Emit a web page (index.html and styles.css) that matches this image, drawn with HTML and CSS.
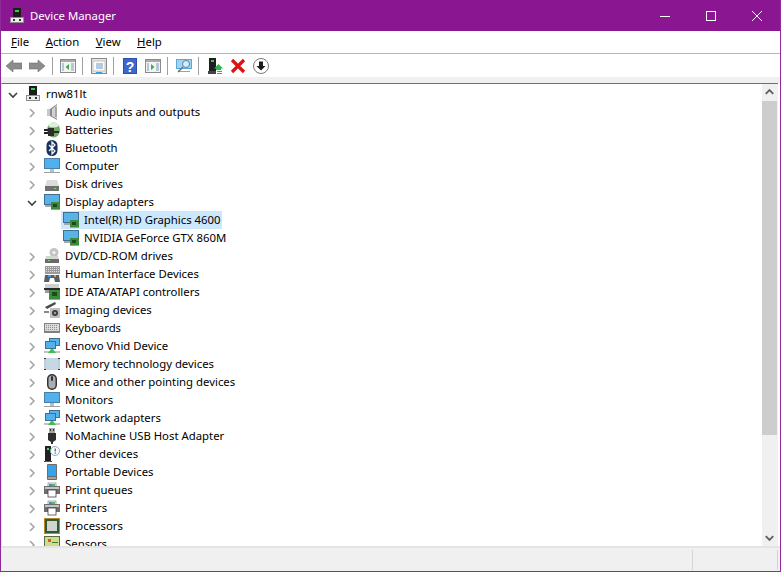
FILE: index.html
```html
<!DOCTYPE html>
<html lang="en">
<head>
    <meta charset="UTF-8">
    <title>Device Manager</title>
    <link rel="stylesheet" href="styles.css">
</head>
<body>

<svg class="defs" width="0" height="0">
    <defs>
        <symbol id="i-host" viewBox="0 0 16 16">
            <rect x="4" y="0" width="8" height="9" fill="#1c1c1c"/>
            <rect x="6" y="2" width="4" height="2" fill="#35d04a"/>
            <rect x="1" y="9" width="14" height="6" fill="#8d8d8d"/>
            <rect x="2" y="10" width="12" height="4" fill="#ededed"/>
            <rect x="4" y="11" width="2" height="2" fill="#333"/>
            <rect x="10" y="11" width="2" height="2" fill="#333"/>
        </symbol>
        <symbol id="i-audio" viewBox="0 0 16 16">
            <rect x="3" y="5" width="3" height="7" fill="#c8c8c8"/>
            <path d="M6 5 L13 0 V16 L6 12 Z" fill="#8a8a8a"/>
            <path d="M8 5 L13 1 V15 L8 12 Z" fill="#d2d2d2"/>
            <rect x="11" y="3" width="2" height="10" fill="#a6a6a6"/>
        </symbol>
        <symbol id="i-battery" viewBox="0 0 16 16">
            <ellipse cx="9.500" cy="8" rx="6.500" ry="7.500" fill="#6fae62"/>
            <ellipse cx="9.500" cy="3" rx="5" ry="2.500" fill="#dcefd8"/>
            <path d="M3 8H9M3 11H10" stroke="#d9b23c"/>
            <rect x="0" y="7" width="5" height="2" fill="#222"/>
            <rect x="0" y="10" width="5" height="2" fill="#222"/>
            <rect x="4" y="6" width="6" height="8" fill="#2c2c2c"/>
            <rect x="10" y="9" width="5" height="2" fill="#2c2c2c"/>
        </symbol>
        <symbol id="i-bluetooth" viewBox="0 0 16 16">
            <rect x="2.500" y="0" width="11" height="16" rx="5.500" fill="#14315f"/>
            <path d="M5 5 L11 11 L8 14 V2 L11 5 L5 11" fill="none" stroke="#fff" stroke-width="1.200"/>
        </symbol>
        <symbol id="i-monitor" viewBox="0 0 16 16">
            <rect x="0" y="0" width="16" height="11" fill="#4a7fa8"/>
            <rect x="1" y="1" width="14" height="9" fill="#4fb2ee"/>
            <rect x="6" y="11" width="4" height="3" fill="#a9c3d6"/>
            <rect x="0" y="14" width="16" height="1" fill="#a0a0a0"/>
        </symbol>
        <symbol id="i-disk" viewBox="0 0 16 16">
            <path d="M3 4 H13 L15 10 H1 Z" fill="#dcdcdc"/>
            <rect x="1" y="10" width="14" height="5" fill="#707070"/>
            <rect x="10" y="12" width="2" height="1" fill="#5fe05f"/>
        </symbol>
        <symbol id="i-display" viewBox="0 0 16 16">
            <rect x="0" y="0" width="16" height="11" fill="#3f6f92"/>
            <rect x="1" y="1" width="14" height="9" fill="#58b4e8"/>
            <rect x="1" y="11" width="7" height="2" fill="#a8a8a8"/>
            <rect x="7" y="8" width="9" height="7" fill="#3c8a3c"/>
            <rect x="9" y="10" width="4" height="3" fill="#1d4a1d"/>
            <rect x="7" y="15" width="9" height="1" fill="#c9a227"/>
        </symbol>
        <symbol id="i-dvd" viewBox="0 0 16 16">
            <circle cx="10" cy="4.500" r="4.500" fill="#c4c4c4"/>
            <circle cx="10" cy="4.500" r="1.500" fill="#f4f4f4"/>
            <path d="M2 8 H14 L15 11 H1 Z" fill="#d5d5d5"/>
            <rect x="1" y="11" width="14" height="4" fill="#6a6a6a"/>
            <rect x="4" y="12" width="2" height="1" fill="#5fe05f"/>
        </symbol>
        <symbol id="i-hid" viewBox="0 0 16 16">
            <rect x="1" y="0" width="15" height="8" fill="#9a9a9a"/>
            <path d="M2 1.500H15M2 3.500H15M2 5.500H15" stroke="#e2e2e2" stroke-dasharray="1 1"/>
            <path d="M0 16 L1 9 H15 L16 16 H11 L10 12 H6 L5 16 Z" fill="#56606a"/>
            <rect x="4" y="9" width="3" height="2" fill="#3c9ae0"/>
            <rect x="10" y="9" width="2" height="2" fill="#e0a03c"/>
        </symbol>
        <symbol id="i-ide" viewBox="0 0 16 16">
            <rect x="1" y="0" width="14" height="4" fill="#cfcfcf"/>
            <rect x="0" y="4" width="16" height="2" fill="#2a2a2a"/>
            <rect x="1" y="6" width="6" height="3" fill="#9b9b9b"/>
            <rect x="5" y="6" width="11" height="9" fill="#3c8a3c"/>
            <rect x="8" y="8" width="5" height="4" fill="#1d4a1d"/>
            <rect x="5" y="15" width="11" height="1" fill="#c9a227"/>
        </symbol>
        <symbol id="i-imaging" viewBox="0 0 16 16">
            <path d="M1 5 L11 0 L12 2 L3 7 Z" fill="#4a4a4a"/>
            <rect x="0" y="9" width="5" height="2" fill="#8a8a8a"/>
            <rect x="6" y="6" width="10" height="10" fill="#bfbfbf"/>
            <circle cx="11" cy="11" r="3" fill="#3a3a3a"/>
            <circle cx="11" cy="11" r="1.300" fill="#7ea6c2"/>
        </symbol>
        <symbol id="i-keyboard" viewBox="0 0 16 16">
            <rect x="0" y="3" width="16" height="10" fill="#808080"/>
            <rect x="1" y="4" width="14" height="7" fill="#dcdcdc"/>
            <path d="M2 5.500H14M2 7.500H14M2 9.500H14" stroke="#8e8e8e" stroke-dasharray="1 1"/>
        </symbol>
        <symbol id="i-network" viewBox="0 0 16 16">
            <rect x="5" y="0" width="11" height="8" fill="#3f6f92"/>
            <rect x="6" y="1" width="9" height="6" fill="#58b4e8"/>
            <rect x="1" y="3" width="11" height="8" fill="#3f6f92"/>
            <rect x="2" y="4" width="9" height="6" fill="#4fb2ee"/>
            <rect x="0" y="13" width="16" height="2" fill="#c4c4c4"/>
            <path d="M4 15 L7 11 H9 L12 15 Z" fill="#3fbf4f"/>
        </symbol>
        <symbol id="i-memory" viewBox="0 0 16 16">
            <rect x="0" y="2" width="16" height="12" fill="#333"/>
            <rect x="0" y="3" width="16" height="10" fill="#bcd0dc"/>
            <rect x="2" y="2" width="12" height="12" fill="#c6d8e3"/>
        </symbol>
        <symbol id="i-mouse" viewBox="0 0 16 16">
            <rect x="3" y="0" width="10" height="16" rx="5" fill="#333"/>
            <rect x="4.500" y="1.500" width="7" height="13" rx="3.500" fill="#a9aeb4"/>
            <rect x="7" y="2" width="2" height="5" rx="1" fill="#333"/>
        </symbol>
        <symbol id="i-usb" viewBox="0 0 16 16">
            <rect x="5" y="0" width="6" height="5" fill="#a8a8a8"/>
            <rect x="6" y="1" width="1" height="2" fill="#333"/>
            <rect x="9" y="1" width="1" height="2" fill="#333"/>
            <path d="M4 5 H12 V12 L9 14 V16 H7 V14 L4 12 Z" fill="#2e2e2e"/>
        </symbol>
        <symbol id="i-other" viewBox="0 0 16 16">
            <rect x="1" y="0" width="6" height="15" fill="#222"/>
            <rect x="3" y="2" width="2" height="2" fill="#3ee04f"/>
            <rect x="0" y="15" width="8" height="1" fill="#555"/>
            <circle cx="11" cy="5" r="4.500" fill="#fff" stroke="#8fa8c0"/>
            <rect x="10.500" y="2.500" width="1.500" height="3" fill="#4f7fae"/>
            <rect x="10.500" y="6.500" width="1.500" height="1.200" fill="#4f7fae"/>
        </symbol>
        <symbol id="i-portable" viewBox="0 0 16 16">
            <rect x="3" y="0" width="10" height="16" rx="1" fill="#6b6b6b"/>
            <rect x="4" y="1" width="8" height="11" fill="#37a3e8"/>
            <rect x="4" y="13" width="8" height="2" fill="#a3a3a3"/>
        </symbol>
        <symbol id="i-printer" viewBox="0 0 16 16">
            <rect x="4" y="1" width="8" height="4" fill="#f2f2f2" stroke="#777" stroke-width=".6"/>
            <rect x="5" y="2" width="3" height="2" fill="#3c8fe0"/>
            <rect x="8" y="2" width="3" height="2" fill="#45c25a"/>
            <rect x="0" y="4" width="16" height="8" fill="#6e6e6e"/>
            <rect x="1" y="5" width="14" height="2" fill="#c4c4c4"/>
            <rect x="4" y="8" width="8" height="7" fill="#fff" stroke="#444" stroke-width=".8"/>
        </symbol>
        <symbol id="i-cpu" viewBox="0 0 16 16">
            <rect x="0" y="0" width="16" height="16" fill="#b8892a"/>
            <rect x="1" y="1" width="14" height="14" fill="#2f5a3a"/>
            <rect x="3" y="3" width="10" height="10" fill="#cfd6cf"/>
        </symbol>
        <symbol id="i-sensor" viewBox="0 0 16 16">
            <rect x="0" y="0" width="16" height="16" fill="#5a6a3a"/>
            <rect x="1" y="1" width="14" height="14" fill="#cfdc8a"/>
            <rect x="4" y="3" width="3" height="3" fill="#d8553a"/>
            <rect x="8" y="6" width="6" height="1" fill="#3a7a3a"/>
        </symbol>
        <symbol id="i-chevron" viewBox="0 0 10 10">
            <path d="M3 1 L7 5 L3 9" fill="none" stroke="#a6a6a6" stroke-width="1.600"/>
        </symbol>
        <symbol id="i-chevron-open" viewBox="0 0 10 10">
            <path d="M1 3 L5 7 L9 3" fill="none" stroke="#404040" stroke-width="1.600"/>
        </symbol>
    </defs>
</svg>

<div class="window">
    <div class="titlebar">
        <svg class="title-icon"><use href="#i-host"/></svg>
        <span class="title-text">Device Manager</span>
        <div class="caption-buttons">
            <svg class="caption-btn" viewBox="0 0 46 30"><path d="M18 15.500H28" stroke="#fff"/></svg>
            <svg class="caption-btn" viewBox="0 0 46 30"><rect x="18.500" y="10.500" width="9" height="9" fill="none" stroke="#fff"/></svg>
            <svg class="caption-btn" viewBox="0 0 46 30"><path d="M18 10L28 20M28 10L18 20" stroke="#fff"/></svg>
        </div>
    </div>

    <div class="menubar">
        <span class="menu-item"><u>F</u>ile</span>
        <span class="menu-item"><u>A</u>ction</span>
        <span class="menu-item"><u>V</u>iew</span>
        <span class="menu-item"><u>H</u>elp</span>
    </div>

    <div class="toolbar">
        <svg class="tool" viewBox="0 0 16 16"><path d="M0 8 L7 2 V5 H16 V11 H7 V14 Z" fill="#8c8c8c" stroke="#6e6e6e" stroke-width=".6"/></svg>
        <svg class="tool" viewBox="0 0 16 16"><path d="M16 8 L9 2 V5 H0 V11 H9 V14 Z" fill="#8c8c8c" stroke="#6e6e6e" stroke-width=".6"/></svg>
        <span class="tool-sep"></span>
        <svg class="tool" viewBox="0 0 16 16"><rect x=".5" y="1.500" width="15" height="13" fill="#f4f4f4" stroke="#8a8a8a"/><rect x="1" y="2" width="14" height="2" fill="#a9a9a9"/><path d="M9 6 L5.500 9 L9 12 Z" fill="#35b04a"/><path d="M2 6H4M2 8H4M2 10H4M2 12H4M11 6H14M11 8H14M11 10H14M11 12H14" stroke="#7b9cb5"/></svg>
        <span class="tool-sep"></span>
        <svg class="tool" viewBox="0 0 16 16"><rect x=".5" y=".5" width="15" height="15" fill="#e6e6e6" stroke="#8a8a8a"/><rect x="2" y="3" width="12" height="10" fill="#fbfbfb" stroke="#a6a6a6" stroke-width=".6"/><path d="M5 6H12M5 8H12M5 10H12" stroke="#6a9cc4"/><rect x="5" y="14" width="6" height="2" fill="#35a0e0"/></svg>
        <span class="tool-sep"></span>
        <svg class="tool" viewBox="0 0 16 16"><rect x="1" width="14" height="16" fill="#2b4fb0"/><rect x="2" y="1" width="12" height="14" fill="#3d67c8"/><text x="8" y="13.500" class="help-glyph">?</text></svg>
        <svg class="tool" viewBox="0 0 16 16"><rect x=".5" y="1.500" width="15" height="13" fill="#f4f4f4" stroke="#8a8a8a"/><rect x="1" y="2" width="14" height="2" fill="#a9a9a9"/><path d="M6 6 L9.500 9 L6 12 Z" fill="#35b04a"/><path d="M2 6H4M2 8H4M2 10H4M2 12H4M11 6H14M11 8H14M11 10H14M11 12H14" stroke="#7b9cb5"/></svg>
        <span class="tool-sep"></span>
        <svg class="tool" viewBox="0 0 16 16"><rect x="0" y="1" width="16" height="10" fill="#5aa9dc"/><rect x="1" y="2" width="14" height="8" fill="#9fd4f2"/><rect x="2" y="13" width="12" height="1" fill="#a0a0a0"/><circle cx="10" cy="6" r="3.500" fill="#d6eefb" stroke="#5e7f96"/><path d="M7 9 L2 14" stroke="#6e6e6e" stroke-width="1.500"/></svg>
        <span class="tool-sep"></span>
        <svg class="tool" viewBox="0 0 16 16"><rect x="2" y="0" width="7" height="13" fill="#1f1f1f"/><rect x="4" y="2" width="3" height="2" fill="#35d04a"/><rect x="1" y="13" width="8" height="3" fill="#444"/><path d="M11.500 6 L16 10.500 H14 V12 H9 V10.500 H7 Z" fill="#2fb34a"/><path d="M10 13.500H15M10 15.500H15" stroke="#2fb34a"/></svg>
        <svg class="tool" viewBox="0 0 16 16"><path d="M2 2 L14 14 M14 2 L2 14" stroke="#e01010" stroke-width="3.200"/></svg>
        <svg class="tool" viewBox="0 0 16 16"><circle cx="8" cy="8" r="7.500" fill="#fff" stroke="#7a7a7a"/><path d="M6 3.500H10V8H12.500L8 12.500L3.500 8H6Z" fill="#1c1c1c"/></svg>
    </div>

    <div class="content">
        <div class="tree">
            <div class="row root">
                <svg class="chevron"><use href="#i-chevron-open"/></svg>
                <svg class="icon"><use href="#i-host"/></svg>
                <span class="label">rnw81lt</span>
            </div>
            <div class="row"><svg class="chevron"><use href="#i-chevron"/></svg><svg class="icon"><use href="#i-audio"/></svg><span class="label">Audio inputs and outputs</span></div>
            <div class="row"><svg class="chevron"><use href="#i-chevron"/></svg><svg class="icon"><use href="#i-battery"/></svg><span class="label">Batteries</span></div>
            <div class="row"><svg class="chevron"><use href="#i-chevron"/></svg><svg class="icon"><use href="#i-bluetooth"/></svg><span class="label">Bluetooth</span></div>
            <div class="row"><svg class="chevron"><use href="#i-chevron"/></svg><svg class="icon"><use href="#i-monitor"/></svg><span class="label">Computer</span></div>
            <div class="row"><svg class="chevron"><use href="#i-chevron"/></svg><svg class="icon"><use href="#i-disk"/></svg><span class="label">Disk drives</span></div>
            <div class="row"><svg class="chevron"><use href="#i-chevron-open"/></svg><svg class="icon"><use href="#i-display"/></svg><span class="label">Display adapters</span></div>
            <div class="row child"><div class="selected"><svg class="icon"><use href="#i-display"/></svg><span class="label">Intel(R) HD Graphics 4600</span></div></div>
            <div class="row child"><div class="unselected"><svg class="icon"><use href="#i-display"/></svg><span class="label">NVIDIA GeForce GTX 860M</span></div></div>
            <div class="row"><svg class="chevron"><use href="#i-chevron"/></svg><svg class="icon"><use href="#i-dvd"/></svg><span class="label">DVD/CD-ROM drives</span></div>
            <div class="row"><svg class="chevron"><use href="#i-chevron"/></svg><svg class="icon"><use href="#i-hid"/></svg><span class="label">Human Interface Devices</span></div>
            <div class="row"><svg class="chevron"><use href="#i-chevron"/></svg><svg class="icon"><use href="#i-ide"/></svg><span class="label">IDE ATA/ATAPI controllers</span></div>
            <div class="row"><svg class="chevron"><use href="#i-chevron"/></svg><svg class="icon"><use href="#i-imaging"/></svg><span class="label">Imaging devices</span></div>
            <div class="row"><svg class="chevron"><use href="#i-chevron"/></svg><svg class="icon"><use href="#i-keyboard"/></svg><span class="label">Keyboards</span></div>
            <div class="row"><svg class="chevron"><use href="#i-chevron"/></svg><svg class="icon"><use href="#i-network"/></svg><span class="label">Lenovo Vhid Device</span></div>
            <div class="row"><svg class="chevron"><use href="#i-chevron"/></svg><svg class="icon"><use href="#i-memory"/></svg><span class="label">Memory technology devices</span></div>
            <div class="row"><svg class="chevron"><use href="#i-chevron"/></svg><svg class="icon"><use href="#i-mouse"/></svg><span class="label">Mice and other pointing devices</span></div>
            <div class="row"><svg class="chevron"><use href="#i-chevron"/></svg><svg class="icon"><use href="#i-monitor"/></svg><span class="label">Monitors</span></div>
            <div class="row"><svg class="chevron"><use href="#i-chevron"/></svg><svg class="icon"><use href="#i-network"/></svg><span class="label">Network adapters</span></div>
            <div class="row"><svg class="chevron"><use href="#i-chevron"/></svg><svg class="icon"><use href="#i-usb"/></svg><span class="label">NoMachine USB Host Adapter</span></div>
            <div class="row"><svg class="chevron"><use href="#i-chevron"/></svg><svg class="icon"><use href="#i-other"/></svg><span class="label">Other devices</span></div>
            <div class="row"><svg class="chevron"><use href="#i-chevron"/></svg><svg class="icon"><use href="#i-portable"/></svg><span class="label">Portable Devices</span></div>
            <div class="row"><svg class="chevron"><use href="#i-chevron"/></svg><svg class="icon"><use href="#i-printer"/></svg><span class="label">Print queues</span></div>
            <div class="row"><svg class="chevron"><use href="#i-chevron"/></svg><svg class="icon"><use href="#i-printer"/></svg><span class="label">Printers</span></div>
            <div class="row"><svg class="chevron"><use href="#i-chevron"/></svg><svg class="icon"><use href="#i-cpu"/></svg><span class="label">Processors</span></div>
            <div class="row"><svg class="chevron"><use href="#i-chevron"/></svg><svg class="icon"><use href="#i-sensor"/></svg><span class="label">Sensors</span></div>
        </div>
        <div class="scrollbar">
            <svg class="scroll-arrow" viewBox="0 0 16 17"><path d="M4 10 L8 6 L12 10" fill="none" stroke="#606060" stroke-width="2"/></svg>
            <div class="scroll-track"><div class="scroll-thumb"></div></div>
            <svg class="scroll-arrow" viewBox="0 0 16 17"><path d="M4 7 L8 11 L12 7" fill="none" stroke="#606060" stroke-width="2"/></svg>
        </div>
    </div>

    <div class="statusbar">
        <div class="status-cell status-main"></div>
        <div class="status-cell status-mid"></div>
    </div>
</div>

</body>
</html>
```

FILE: styles.css
```css
* {
    box-sizing: border-box;
}

html, body {
    margin: 0;
    padding: 0;
    height: 100%;
    overflow: hidden;
}

body {
    font-family: "Noto Sans", "Open Sans", sans-serif;
    font-size: 11.35px;
    color: #000;
    background: #fff;
}

.defs {
    position: absolute;
}

.window {
    display: flex;
    flex-direction: column;
    height: 572px;
    border: 1px solid #8f2a9b;
    border-top: none;
    background: #fff;
}

/* title bar */
.titlebar {
    display: flex;
    align-items: center;
    height: 31px;
    flex: none;
    background: #8a1791;
    color: #fff;
    padding-left: 8px;
}

.title-icon {
    width: 16px;
    height: 16px;
    margin-right: 5px;
}

.title-text {
    flex: 1;
}

.caption-buttons {
    display: flex;
}

.caption-btn {
    width: 46px;
    height: 30px;
}

/* menu */
.menubar {
    display: flex;
    align-items: center;
    height: 23px;
    flex: none;
    padding-left: 3px;
    padding-bottom: 2px;
    border-bottom: 1px solid #b9b4bd;
}

.menu-item {
    padding: 0 7px;
    margin-right: 2.5px;
}

/* toolbar */
.toolbar {
    display: flex;
    align-items: center;
    height: 29px;
    flex: none;
    padding-left: 5px;
    padding-bottom: 6px;
    gap: 7px;
}

.tool {
    width: 16px;
    height: 16px;
    flex: none;
}

.tool-sep {
    width: 1px;
    height: 18px;
    background: #a0a0a0;
    flex: none;
}

.tool-sep ~ .tool-sep {
    margin-left: -1px;
    margin-right: 1px;
}

.help-glyph {
    font-family: "Liberation Sans", sans-serif;
    font-size: 14px;
    font-weight: bold;
    fill: #fff;
    text-anchor: middle;
}

/* tree area */
.content {
    display: flex;
    flex: 1;
    min-height: 0;
    box-shadow: 0 -6px 0 #f0f0f0;
    padding-right: 2px;
    background: #fff;
}

.tree {
    flex: 1;
    overflow: hidden;
    padding-top: 1px;
    border-top: 1px solid #6e6e6e;
    border-left: 1px solid #e6e6e6;
}

.row {
    display: flex;
    align-items: center;
    height: 18px;
    padding-left: 25px;
}

.root {
    padding-left: 6px;
}

.child {
    padding-left: 59px;
}

.chevron {
    width: 10px;
    height: 10px;
    flex: none;
    margin-top: 2px;
    margin-right: 7px;
}

.icon {
    width: 16px;
    height: 16px;
    flex: none;
    margin-right: 5px;
}

.label {
    margin-top: -1px;
}

.selected, .unselected {
    display: flex;
    align-items: center;
    height: 18px;
    padding-left: 2px;
    padding-right: 1px;
}

.selected {
    background: #cce8ff;
}

.scrollbar {
    display: flex;
    flex-direction: column;
    width: 16px;
    flex: none;
    background: #f0f0f0;
    border-top: 1px solid #6e6e6e;
}

.scroll-arrow {
    width: 15px;
    height: 17px;
    flex: none;
}

.scroll-track {
    flex: 1;
}

.scroll-thumb {
    width: 15px;
    height: 334px;
    background: #cdcdcd;
}

/* status bar */
.statusbar {
    display: flex;
    height: 25px;
    flex: none;
    background: #f0f0f0;
    border-top: 2px solid #e4e4e4;
    padding: 2px 2px 1px 0;
}

.status-main {
    flex: 1;
    border-right: 1px solid #d4d4d4;
}

.status-mid {
    width: 85px;
    border-right: 1px solid #d4d4d4;
}
```
